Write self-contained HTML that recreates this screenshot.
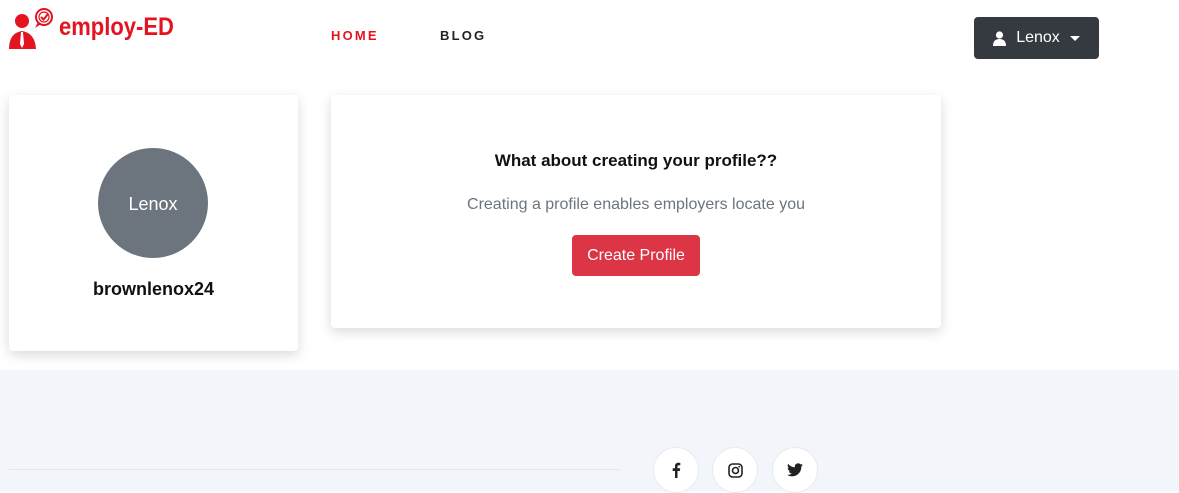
<!DOCTYPE html>
<html><head><style>
*{margin:0;padding:0;box-sizing:border-box}
body{width:1179px;height:491px;overflow:hidden;background:#fff;font-family:"Liberation Sans",sans-serif;position:relative}
.abs{position:absolute}
.card{background:#fff;border-radius:4px;box-shadow:0 4px 12px rgba(0,0,0,.15)}
.soc{width:46px;height:46px;border-radius:50%;background:#fff;border:1px solid #e8ebef;display:flex;align-items:center;justify-content:center}
</style></head><body>
<svg class="abs" style="left:8px;top:8px" width="48" height="42" viewBox="0 0 48 42">
<circle cx="14" cy="13" r="7" fill="#e3141f"/>
<path d="M1 41 Q1 25 14 23 Q27 25 28 41Z" fill="#e3141f"/>
<path d="M13 24 L15 24 L16 36 L14 40 L12 36Z" fill="#fff"/>
<circle cx="36" cy="9" r="8" fill="#fff" stroke="#e3141f" stroke-width="2"/>
<circle cx="36" cy="9" r="5" fill="none" stroke="#e3141f" stroke-width="1.2"/>
<path d="M33 9 L35.5 11.5 L40 6" fill="none" stroke="#e3141f" stroke-width="2"/>
<path d="M30 14 L27 20 L33 16Z" fill="#e3141f"/>
</svg>
<div class="abs" style="left:59px;top:13px;color:#e3141f;font-size:25px;font-weight:bold;transform:scaleX(.88);transform-origin:left">employ-ED</div>
<div class="abs" style="left:331px;top:28px;color:#e3141f;font-size:13px;font-weight:bold;letter-spacing:2.2px">HOME</div>
<div class="abs" style="left:440px;top:28px;color:#222;font-size:13px;font-weight:bold;letter-spacing:2.2px">BLOG</div>
<div class="abs" style="left:974px;top:17px;width:125px;height:42px;background:#343a40;border-radius:4px;color:#fff;font-size:16px;display:flex;align-items:center;justify-content:center;gap:10px">
<svg width="13" height="15" viewBox="0 0 13 15"><circle cx="6.5" cy="4" r="3.6" fill="#fff"/><path d="M0 15 Q0 8 6.5 8 Q13 8 13 15Z" fill="#fff"/></svg>
<span>Lenox</span><span style="border-left:5px solid transparent;border-right:5px solid transparent;border-top:5px solid #fff"></span></div>
<div class="abs card" style="left:9px;top:95px;width:289px;height:256px"></div>
<div class="abs" style="left:98px;top:148px;width:110px;height:110px;border-radius:50%;background:#6c757d;color:#fff;font-size:18px;display:flex;align-items:center;justify-content:center;padding-top:2px">Lenox</div>
<div class="abs" style="left:9px;top:279px;width:289px;text-align:center;font-size:18px;font-weight:bold;color:#111">brownlenox24</div>
<div class="abs card" style="left:331px;top:95px;width:610px;height:233px"></div>
<div class="abs" style="left:331px;top:151px;width:610px;text-align:center;font-size:17px;font-weight:bold;color:#111">What about creating your profile??</div>
<div class="abs" style="left:331px;top:196px;width:610px;text-align:center;font-size:16px;color:#6c757d">Creating a profile enables employers locate you</div>
<div class="abs" style="left:572px;top:235px;width:128px;height:41px;background:#dc3545;border-radius:4px;color:#fff;font-size:16px;display:flex;align-items:center;justify-content:center">Create Profile</div>
<div class="abs" style="left:0;top:370px;width:1179px;height:121px;background:#f2f5f9"></div>
<div class="abs" style="left:9px;top:469px;width:611px;height:1px;background:#e2e5ea"></div>
<div class="abs soc" style="left:653px;top:447px"><svg width="10" height="16" viewBox="0 0 10 16"><path d="M6.5 16V9h2.3l.4-2.7H6.5V4.6c0-.8.3-1.3 1.4-1.3H9.3V.9C9 .9 8.2.8 7.3.8 5.3.8 4 2 4 4.2v2.1H1.7V9H4v7Z" fill="#222"/></svg></div>
<div class="abs soc" style="left:712px;top:447px"><svg width="15" height="15" viewBox="0 0 15 15"><rect x="1" y="1" width="13" height="13" rx="3.5" fill="none" stroke="#222" stroke-width="1.6"/><circle cx="7.5" cy="7.5" r="3" fill="none" stroke="#222" stroke-width="1.6"/><circle cx="11.2" cy="3.8" r=".9" fill="#222"/></svg></div>
<div class="abs soc" style="left:772px;top:447px"><svg width="16" height="14" viewBox="0 0 24 20"><path d="M24 2.4a9.8 9.8 0 0 1-2.8.8A4.9 4.9 0 0 0 23.3.4a9.9 9.9 0 0 1-3.1 1.2A4.9 4.9 0 0 0 11.800 6 14 14 0 0 1 1.7.9a4.9 4.9 0 0 0 1.5 6.6A4.9 4.9 0 0 1 1 6.9a4.9 4.9 0 0 0 3.9 4.8 4.9 4.9 0 0 1-2.2.1 4.9 4.9 0 0 0 4.6 3.4A9.9 9.9 0 0 1 0 17.3 14 14 0 0 0 7.5 19.5c9.1 0 14-7.5 14-14v-.6A10 10 0 0 0 24 2.4z" fill="#222"/></svg></div>
</body></html>
